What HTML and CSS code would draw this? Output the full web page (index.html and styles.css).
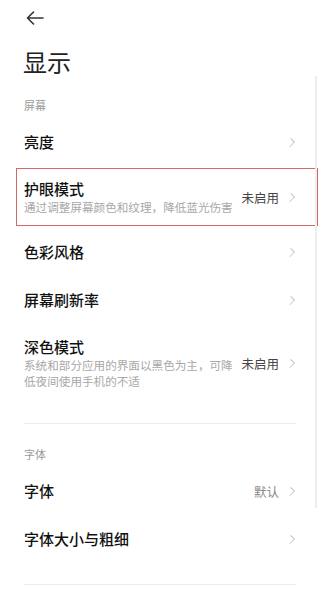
FILE: index.html
```html
<!DOCTYPE html>
<html lang="zh-CN">
<head>
    <meta charset="UTF-8">
    <meta name="viewport" content="width=device-width, initial-scale=1.0">
    <title>显示</title>
    <link rel="stylesheet" href="styles.css">
</head>
<body>
    <div class="page">
        <div class="top-bar">
            <svg class="back-icon" width="18" height="14" viewBox="0 0 18 14">
                <path d="M17 7H1.5M7.5 1L1.5 7l6 6" fill="none" stroke="#333" stroke-width="1.6" stroke-linecap="round" stroke-linejoin="round"/>
            </svg>
        </div>

        <h1 class="page-title">显示</h1>

        <div class="section-label">屏幕</div>

        <div class="row">
            <div class="row-text">
                <div class="row-title">亮度</div>
            </div>
            <span class="chevron"></span>
        </div>

        <div class="row row-marked">
            <div class="row-text">
                <div class="row-title">护眼模式</div>
                <div class="row-sub">通过调整屏幕颜色和纹理，降低蓝光伤害</div>
            </div>
            <span class="row-value">未启用</span>
            <span class="chevron"></span>
        </div>

        <div class="row">
            <div class="row-text">
                <div class="row-title">色彩风格</div>
            </div>
            <span class="chevron"></span>
        </div>

        <div class="row">
            <div class="row-text">
                <div class="row-title">屏幕刷新率</div>
            </div>
            <span class="chevron"></span>
        </div>

        <div class="row">
            <div class="row-text">
                <div class="row-title">深色模式</div>
                <div class="row-sub">系统和部分应用的界面以黑色为主，可降低夜间使用手机的不适</div>
            </div>
            <span class="row-value">未启用</span>
            <span class="chevron"></span>
        </div>

        <div class="divider"></div>

        <div class="section-label">字体</div>

        <div class="row">
            <div class="row-text">
                <div class="row-title">字体</div>
            </div>
            <span class="row-value light">默认</span>
            <span class="chevron"></span>
        </div>

        <div class="row">
            <div class="row-text">
                <div class="row-title">字体大小与粗细</div>
            </div>
            <span class="chevron"></span>
        </div>

        <div class="divider"></div>

        <div class="scroll-thumb"></div>
    </div>
</body>
</html>
```

FILE: styles.css
```css
/* Base */
body {
    margin: 0;
    padding: 0;
    background-color: #fff;
    font-family: "Noto Sans CJK SC", "Noto Sans", sans-serif;
    color: #1a1a1a;
}

.page {
    position: relative;
    width: 321px;
    overflow: hidden;
}

/* Header */
.top-bar {
    height: 36px;
    display: flex;
    align-items: center;
    padding-left: 26px;
}

.back-icon {
    display: block;
}

.page-title {
    margin: 10px 0 0 23px;
    font-size: 24px;
    line-height: 32px;
    font-weight: 400;
    color: #222;
}

/* Sections */
.section-label {
    margin-top: 19px;
    padding: 0 24px 5px;
    font-size: 11px;
    line-height: 16px;
    color: #9a9a9a;
}

.divider + .section-label {
    margin-top: 22px;
}

.divider {
    height: 1px;
    margin: 21px 25px 0 24px;
    background-color: #ececec;
}

/* Rows */
.row {
    position: relative;
    box-sizing: border-box;
    min-height: 48px;
    padding: 13px 25px 13px 24px;
    display: flex;
    align-items: center;
}

.row-text {
    flex: 1;
    min-width: 0;
}

.row-title {
    font-size: 15px;
    line-height: 20px;
    font-weight: 500;
    color: #111;
}

.row-sub {
    font-size: 11.6px;
    line-height: 16px;
    color: #a8a8a8;
}

.row-value {
    flex-shrink: 0;
    margin-left: 8px;
    font-size: 12.5px;
    white-space: nowrap;
    color: #444;
}

.row-value.light {
    color: #8a8a8a;
}

.chevron {
    flex-shrink: 0;
    width: 6px;
    height: 6px;
    margin-left: 8px;
    margin-right: 2px;
    border-top: 1.2px solid #c4c4c4;
    border-right: 1.2px solid #c4c4c4;
    transform: rotate(45deg) scaleX(0.8);
}

/* Annotation around eye-care row */
.row-marked::after {
    content: "";
    position: absolute;
    left: 16px;
    right: 3px;
    top: 2px;
    bottom: 2px;
    border: 1.5px solid #cf6a66;
    pointer-events: none;
}

.scroll-thumb {
    position: absolute;
    right: 4px;
    top: 76px;
    width: 2px;
    height: 432px;
    background-color: #eeeeee;
}
```
